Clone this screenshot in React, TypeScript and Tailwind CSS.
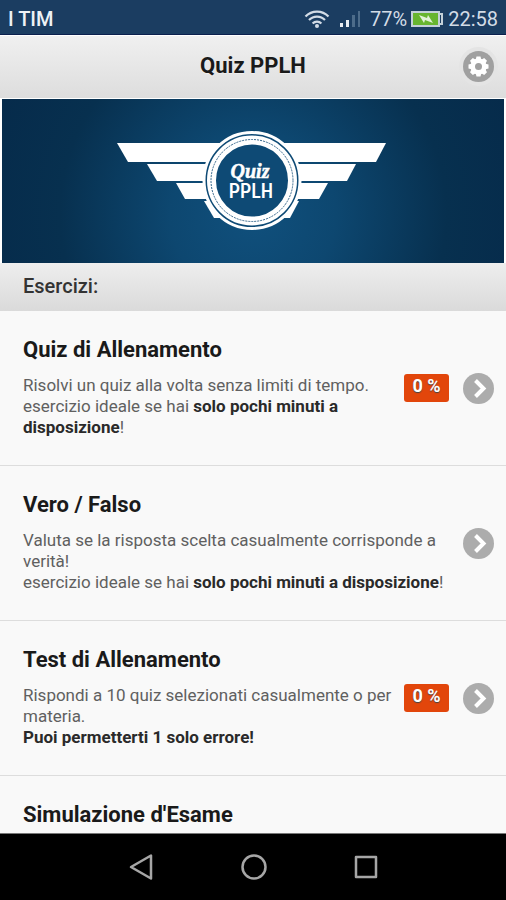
import type { ReactNode } from "react";

type Exercise = {
  title: string;
  body?: ReactNode;
  score?: string;
};

const exercises: Exercise[] = [
  {
    title: "Quiz di Allenamento",
    score: "0 %",
    body: (
      <>
        Risolvi un quiz alla volta senza limiti di tempo.
        <br />
        esercizio ideale se hai <b className="font-bold text-[#2a2a2a]">solo pochi minuti a disposizione</b>!
      </>
    ),
  },
  {
    title: "Vero / Falso",
    body: (
      <>
        Valuta se la risposta scelta casualmente corrisponde a verità!
        <br />
        esercizio ideale se hai <b className="font-bold text-[#2a2a2a]">solo pochi minuti a disposizione</b>!
      </>
    ),
  },
  {
    title: "Test di Allenamento",
    score: "0 %",
    body: (
      <>
        Rispondi a 10 quiz selezionati casualmente o per materia.
        <br />
        <b className="font-bold text-[#2a2a2a]">Puoi permetterti 1 solo errore!</b>
      </>
    ),
  },
  { title: "Simulazione d'Esame" },
];

function StatusBar() {
  return (
    <div className="flex h-[35px] shrink-0 items-center justify-between border-b border-[#0b1f4d] bg-[#1b3d61] px-2 pt-1 text-[20px] leading-6 text-[#d3dce6]">
      <span className="font-medium text-[#eef2f6]">I TIM</span>
      <div className="flex items-center gap-1">
        <svg width="26" height="20" viewBox="0 0 26 20" fill="none" stroke="#d3dce6" strokeWidth="2.2" aria-hidden="true">
          <path d="M1.5 7.5a16 16 0 0 1 23 0M5 11a11 11 0 0 1 16 0M8.6 14.4a6.2 6.2 0 0 1 8.8 0" />
          <circle cx="13" cy="17" r="2" fill="#d3dce6" stroke="none" />
        </svg>
        <svg className="ml-1" width="24" height="20" viewBox="0 0 24 20" aria-hidden="true">
          <path d="M2 14h3v4H2z M8 11h3v7H8z" fill="#e8eef4" />
          <path d="M14 6h3v12h-3z M20 2h2v16h-2z" fill="#4d6c8a" />
        </svg>
        <span className="ml-1">77%</span>
        <svg width="33" height="18" viewBox="0 0 33 18" aria-hidden="true">
          <rect x="1" y="2" width="27" height="14" fill="#67b52f" stroke="#c3d0d8" strokeWidth="2" />
          <path d="M29 4h2v10h-2" fill="none" stroke="#c3d0d8" strokeWidth="2" />
          <path d="M8 5l8 3 1-3 5 8-8-3-1 3z" fill="#e2f2d8" />
        </svg>
        <span>22:58</span>
      </div>
    </div>
  );
}

function Banner() {
  return (
    <div className="shrink-0 bg-white px-[2px] pt-px">
      <div className="flex h-[164px] justify-center bg-[radial-gradient(circle_at_50%_70%,#10507d_0%,#0d4770_30%,#07304f_70%,#062b4b_100%)]">
        <svg width="300" height="164" viewBox="103 99 300 164" role="img" aria-label="Quiz PPLH">
          <g fill="#ffffff">
            <path d="M117 143h269l-10 19H128z" />
            <path d="M147 164h209l-9 17H157z" />
            <path d="M176 183h152l-9 16H185z" />
            <path d="M204 201h95l-9 17h-76z" />
          </g>
          <circle cx="252" cy="180.5" r="48.5" fill="#0e4a75" />
          <circle cx="252" cy="180.5" r="48" fill="none" stroke="#ffffff" strokeWidth="3" />
          <circle cx="252" cy="180.5" r="40.5" fill="none" stroke="#ffffff" strokeWidth="9" />
          <circle cx="252" cy="180.5" r="41" fill="none" stroke="#33658a" strokeWidth="1" strokeDasharray="2 1" />
          <text x="250" y="178" textAnchor="middle" fill="#ffffff" stroke="#ffffff" strokeWidth="0.5" className="font-['Liberation_Serif',serif] text-[20px] font-bold italic">
            Quiz
          </text>
          <text x="251" y="198" textAnchor="middle" fill="#ffffff" className="font-['Roboto_Condensed','Liberation_Sans_Narrow',Roboto,sans-serif] text-[20px] font-medium">
            PPLH
          </text>
        </svg>
      </div>
    </div>
  );
}

function ExerciseRow({ title, body, score }: Exercise) {
  return (
    <li className="border-b border-[#dddddd]">
      <a href="#" className="flex min-h-[154px] items-center pr-3 pl-[23px]">
        <div className="min-w-0 flex-1 self-start pt-[25px]">
          <h2 className="text-[22px] leading-7 font-bold text-[#1a1a1a]">{title}</h2>
          {body && <p className="mt-[11px] pb-[27px] text-[17px] leading-[21px] text-[#606060]">{body}</p>}
        </div>
        {score && (
          <span className="ml-3 flex h-7 w-[45px] items-center justify-center rounded-[3px] bg-[#e2460b] pb-1 text-[18px] leading-6 font-bold text-white [text-shadow:0_1px_1px_#444444]">
            {score}
          </span>
        )}
        <svg className="ml-[14px] shrink-0" width="31" height="31" viewBox="0 0 31 31" aria-hidden="true">
          <circle cx="15.5" cy="15.5" r="15.5" fill="#acacac" />
          <path d="M12.5 7.5l8 8-8 8" fill="none" stroke="#ffffff" strokeWidth="4" />
        </svg>
      </a>
    </li>
  );
}

export default function App() {
  return (
    <div className="flex h-screen flex-col overflow-hidden bg-[#f9f9f9] font-[Roboto,sans-serif]">
      <StatusBar />
      <header className="grid h-[63px] shrink-0 grid-cols-[1fr_auto_1fr] items-center border-t border-white bg-linear-to-b from-[#f0f0f0] to-[#dddddd] pr-3 pb-[2px]">
        <h1 className="col-start-2 pl-3 text-[22px] leading-7 font-bold text-[#1a1a1a] [text-shadow:0_1px_0_#eeeeee]">Quiz PPLH</h1>
        <button type="button" aria-label="Impostazioni" className="size-[31px] justify-self-end rounded-full bg-[#a0a0a0] ring-4 ring-[#e4e4e4]">
          <svg width="31" height="31" viewBox="0 0 31 31" aria-hidden="true">
            <g fill="#ffffff">
              <circle cx="15.5" cy="15.5" r="8" />
              <path d="M13.5 5.5h4l1 4h-6z M13.5 25.5h4l1-4h-6z M5.5 13.5v4l4 1v-6z M25.5 13.5v4l-4 1v-6z" />
              <path d="M13.5 5.5h4l1 4h-6z M13.5 25.5h4l1-4h-6z M5.5 13.5v4l4 1v-6z M25.5 13.5v4l-4 1v-6z" transform="rotate(45 15.5 15.5)" />
            </g>
            <circle cx="15.5" cy="15.5" r="3.5" fill="#a0a0a0" />
          </svg>
        </button>
      </header>
      <Banner />
      <main className="flex min-h-0 flex-1 flex-col overflow-hidden">
        <h2 className="h-12 shrink-0 bg-linear-to-b from-[#eeeeee] to-[#dadada] pt-[11px] pl-[23px] text-[20px] leading-6 font-medium text-[#333333]">
          Esercizi:
        </h2>
        <ul>
          {exercises.map((exercise) => (
            <ExerciseRow key={exercise.title} {...exercise} />
          ))}
        </ul>
      </main>
      <nav aria-label="Android" className="flex h-[67px] shrink-0 items-center justify-center gap-20 border-t border-[#777777] bg-black pl-[2px]">
        <button type="button" aria-label="Indietro">
          <svg width="32" height="32" viewBox="0 0 32 32" fill="none" stroke="#a6a6a6" strokeWidth="2.5" strokeLinejoin="round" aria-hidden="true">
            <path d="M5 16L25 4.5v23z" />
          </svg>
        </button>
        <button type="button" aria-label="Home">
          <svg width="32" height="32" viewBox="0 0 32 32" fill="none" stroke="#a6a6a6" strokeWidth="2.5" aria-hidden="true">
            <circle cx="16" cy="16" r="11.5" />
          </svg>
        </button>
        <button type="button" aria-label="App recenti">
          <svg width="32" height="32" viewBox="0 0 32 32" fill="none" stroke="#a6a6a6" strokeWidth="2.5" strokeLinejoin="round" aria-hidden="true">
            <rect x="6" y="6" width="20" height="20" />
          </svg>
        </button>
      </nav>
    </div>
  );
}
